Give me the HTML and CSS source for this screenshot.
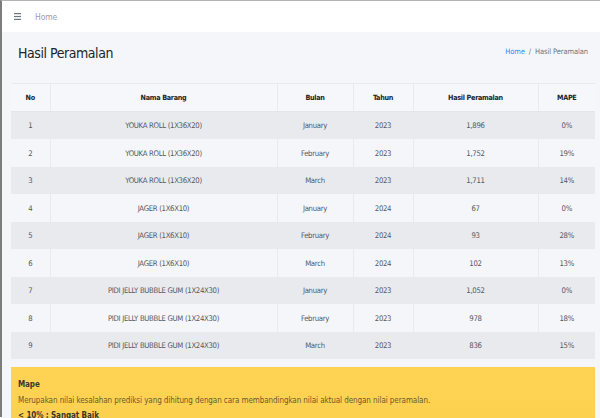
FILE: index.html
```html
<!DOCTYPE html>
<html lang="id">
<head>
<meta charset="utf-8">
<title>Hasil Peramalan</title>
<link rel="stylesheet" href="styles.css">
</head>
<body>
<div class="frame">
  <nav class="navbar">
    <span class="burger">
      <svg width="7" height="7" viewBox="0 0 7 7"><rect x="0" y="0" width="7" height="1.2" fill="#6c757d"/><rect x="0" y="2.9" width="7" height="1.2" fill="#6c757d"/><rect x="0" y="5.8" width="7" height="1.2" fill="#6c757d"/></svg>
    </span>
    <span class="nav-link">Home</span>
  </nav>
  <main class="content">
    <div class="content-header">
      <h1 class="title">Hasil Peramalan</h1>
      <div class="breadcrumb"><span class="crumb-link">Home</span><span class="sep">/</span><span>Hasil Peramalan</span></div>
    </div>
    <div class="card">
      <table class="table">
        <colgroup>
          <col class="c-no"><col class="c-nama"><col class="c-bulan"><col class="c-tahun"><col class="c-hasil"><col class="c-mape">
        </colgroup>
        <thead>
          <tr><th>No</th><th>Nama Barang</th><th>Bulan</th><th>Tahun</th><th>Hasil Peramalan</th><th>MAPE</th></tr>
        </thead>
        <tbody>
          <tr><td>1</td><td>YOUKA ROLL (1X36X20)</td><td>January</td><td>2023</td><td>1,896</td><td>0%</td></tr>
          <tr><td>2</td><td>YOUKA ROLL (1X36X20)</td><td>February</td><td>2023</td><td>1,752</td><td>19%</td></tr>
          <tr><td>3</td><td>YOUKA ROLL (1X36X20)</td><td>March</td><td>2023</td><td>1,711</td><td>14%</td></tr>
          <tr><td>4</td><td>JAGER (1X6X10)</td><td>January</td><td>2024</td><td>67</td><td>0%</td></tr>
          <tr><td>5</td><td>JAGER (1X6X10)</td><td>February</td><td>2024</td><td>93</td><td>28%</td></tr>
          <tr><td>6</td><td>JAGER (1X6X10)</td><td>March</td><td>2024</td><td>102</td><td>13%</td></tr>
          <tr><td>7</td><td>PIDI JELLY BUBBLE GUM (1X24X30)</td><td>January</td><td>2023</td><td>1,052</td><td>0%</td></tr>
          <tr><td>8</td><td>PIDI JELLY BUBBLE GUM (1X24X30)</td><td>February</td><td>2023</td><td>978</td><td>18%</td></tr>
          <tr><td>9</td><td>PIDI JELLY BUBBLE GUM (1X24X30)</td><td>March</td><td>2023</td><td>836</td><td>15%</td></tr>
        </tbody>
      </table>
    </div>
    <div class="callout">
      <p class="callout-title">Mape</p>
      <p class="callout-text">Merupakan nilai kesalahan prediksi yang dihitung dengan cara membandingkan nilai aktual dengan nilai peramalan.</p>
      <p class="callout-strong">&lt; 10% : Sangat Baik</p>
    </div>
  </main>
</div>
</body>
</html>
```
FILE: styles.css
```css
html, body {
  margin: 0;
  padding: 0;
  height: 418px;
  overflow: hidden;
  background: #f4f6f9;
}
body {
  font-family: "DejaVu Sans Condensed", "Roboto", sans-serif;
  color: #495057;
}
.frame {
  border-left: 2px solid #7d7d7d;
  border-top: 1px solid #b4b4b4;
  height: 417px;
  box-sizing: border-box;
}
.navbar {
  height: 31px;
  background: #ffffff;
  display: flex;
  align-items: center;
  padding-left: 12px;
  gap: 14px;
}
.burger {
  display: flex;
  align-items: center;
}
.nav-link {
  font-size: 8.5px;
  letter-spacing: -0.1px;
  color: #9aa0a6;
}
.content {
  padding: 0 5px 0 9px;
}
.content-header {
  height: 51px;
  box-sizing: border-box;
  padding: 0 7px 14px 7px;
  display: flex;
  align-items: center;
  justify-content: space-between;
}
.title {
  margin: 0;
  font-size: 14px;
  letter-spacing: -0.45px;
  font-weight: 400;
  color: #212529;
  position: relative;
  top: 2px;
}
.breadcrumb {
  font-size: 7.5px;
  letter-spacing: -0.1px;
  color: #6c757d;
  display: flex;
  gap: 4px;
  position: relative;
  top: 1px;
}
.crumb-link {
  color: #2f8cf5;
}
.card {
  background: #f6f7fa;
  border-top: 1px solid #e9ecef;
}
.table {
  width: 584px;
  border-collapse: collapse;
  table-layout: fixed;
  font-size: 7.7px;
  letter-spacing: -0.3px;
}
.c-no { width: 39px; }
.c-nama { width: 227px; }
.c-bulan { width: 76px; }
.c-tahun { width: 60px; }
.c-hasil { width: 125px; }
.c-mape { width: 57px; }
.table th, .table td {
  text-align: center;
  border-left: 1px solid #e8eaee;
  padding: 0;
}
.table th:first-child, .table td:first-child {
  border-left: none;
}
.table th {
  height: 27px;
  font-weight: 700;
  font-size: 7.2px;
  color: #212529;
  background: #f6f7fa;
  border-bottom: 1px solid #e3e5e9;
}
.table td {
  height: 27px;
  color: #54595e;
}
.table tbody tr:nth-child(odd) {
  background: #e9eaee;
}
.table tbody tr:nth-child(even) {
  background: #f4f6f9;
}
.table tbody tr:nth-child(even) td {
  height: 28px;
}
.callout {
  margin-top: 8px;
  background: linear-gradient(to bottom, #fed354, #fdd14f);
  padding: 10px 7px 0 7px;
  height: 60px;
  font-size: 8px;
  letter-spacing: -0.08px;
  box-sizing: border-box;
}
.callout p {
  margin: 0;
  line-height: 15.5px;
}
.callout-title {
  font-weight: 700;
  color: #3b372b;
}
.callout-text {
  color: #6a5b2e;
}
.callout-strong {
  font-weight: 700;
  color: #3b372b;
}
```
